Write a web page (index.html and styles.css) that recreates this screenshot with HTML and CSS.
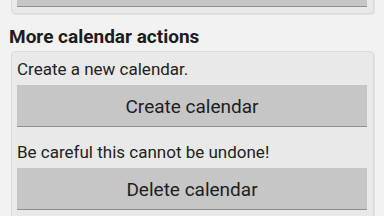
FILE: index.html
```html
<!DOCTYPE html>
<html>
<head>
<meta charset="utf-8">
<link rel="stylesheet" href="styles.css">
</head>
<body>
<div class="page">
  <div class="card card-top">
    <div class="btn"></div>
  </div>
  <h2 class="heading">More calendar actions</h2>
  <div class="card card-main">
    <p class="note">Create a new calendar.</p>
    <div class="btn">Create calendar</div>
    <p class="note note-warn">Be careful this cannot be undone!</p>
    <div class="btn">Delete calendar</div>
  </div>
</div>
</body>
</html>
```
FILE: styles.css
```css
html, body {
  margin: 0;
  padding: 0;
  background: #f2f2f2;
  overflow: hidden;
}
body {
  width: 384px;
  height: 216px;
  font-family: Roboto, "Noto Sans", sans-serif;
  color: #222;
}
.page {
  padding: 0 10px 0 11px;
}
.card {
  background: #e9e9e9;
  border: 1px solid #dadada;
  border-radius: 4px;
  box-shadow: 1px 1px 0 #e2e2e2;
  padding: 0 6px 0 5px;
}
.card-top {
  margin-top: -35px;
  padding-bottom: 6px;
}
.card-top .btn {
  height: 41px;
}
.heading {
  margin: 11px 0 2px -2px;
  font-size: 19px;
  line-height: 24px;
  font-weight: bold;
  color: #1c1c1c;
}
.card-main {
  padding-top: 6px;
  height: 200px;
}
.note {
  margin: 0 0 5px 0;
  font-size: 17px;
  line-height: 22px;
}
.note-warn {
  margin-top: 14px;
}
.btn {
  background: #c6c6c6;
  border-bottom: 1px solid #8e8e8e;
  box-sizing: border-box;
  height: 42px;
  padding-top: 10px;
  font-size: 19px;
  line-height: 24px;
  text-align: center;
  color: #1e1e1e;
}
```
